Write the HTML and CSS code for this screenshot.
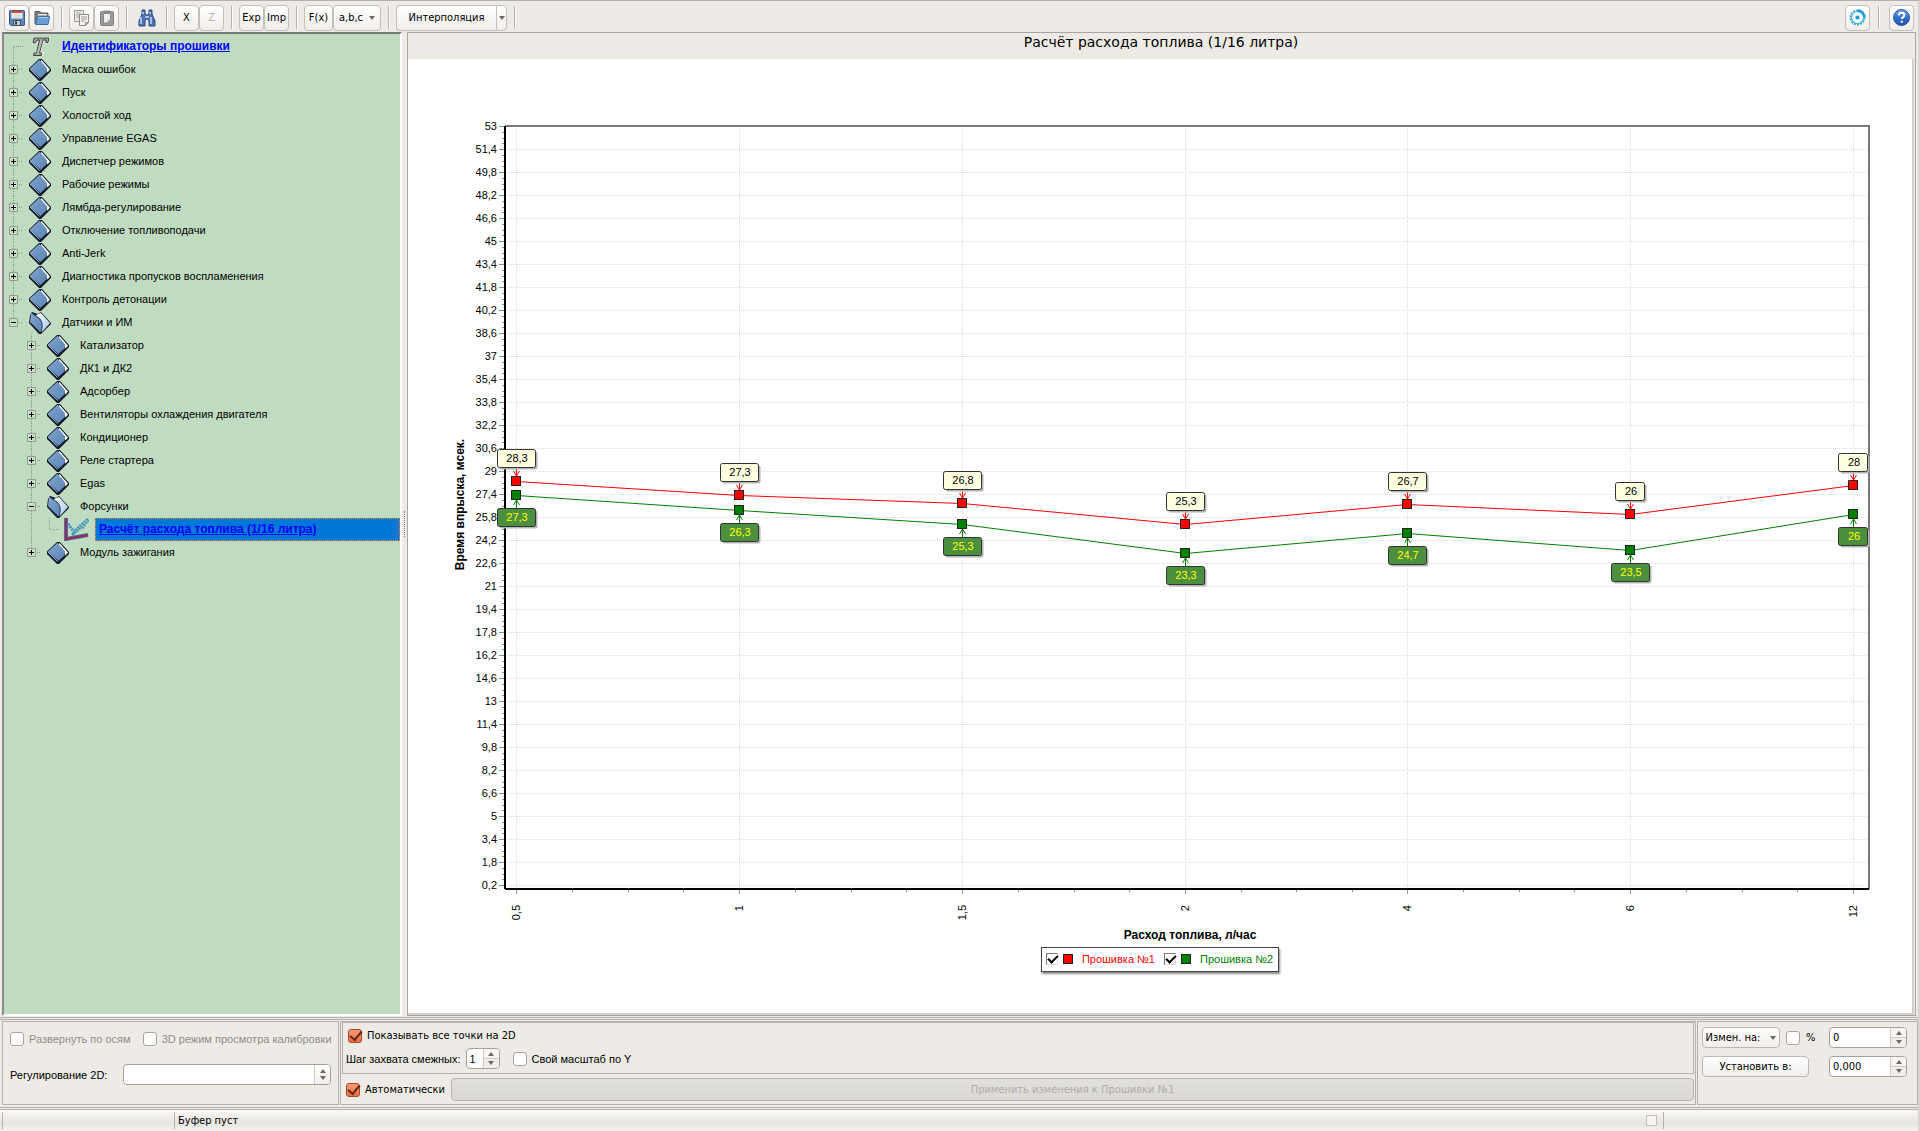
FILE: index.html
```html
<!DOCTYPE html>
<html lang="ru">
<head>
<meta charset="utf-8">
<title>Расчёт расхода топлива</title>
<link rel="stylesheet" href="styles.css">
</head>
<body>
<svg class="defs" aria-hidden="true">
  <linearGradient id="g-blue" x1="0" y1="0" x2="1" y2="1"><stop offset="0" stop-color="#8fb0d6"/><stop offset=".35" stop-color="#7399c6"/><stop offset="1" stop-color="#5c86b4"/></linearGradient>
  <linearGradient id="g-help" x1="0" y1="0" x2="0" y2="1"><stop offset="0" stop-color="#6ba4e8"/><stop offset=".5" stop-color="#3470cc"/><stop offset="1" stop-color="#2450a8"/></linearGradient>
  <linearGradient id="g-page" x1="0" y1="0" x2="1" y2="1"><stop offset="0" stop-color="#fff"/><stop offset="1" stop-color="#a8c4ea"/></linearGradient>
  <symbol id="book" viewBox="0 0 22 22">
    <path d="M0 9.500 10 0h3l9 10v2L12 22h-2L0 12z" fill="#101828"/>
    <path d="M12.500 1 21 10.500l-2.500 3-1.500-3.500-6-7z" fill="#fff"/>
    <path d="M.800 9.800 10.500.8l7.500 8.400-.5 4.300-6 5.500z" fill="url(#g-blue)"/>
    <path d="M1 10.200 10.500 19.500" stroke="#a4bedc" fill="none"/>
  </symbol>
  <symbol id="book-open" viewBox="0 0 22 22">
    <path d="m1 3 2-3 6 2 3-2 10 11v1L12 22h-2L0 11z" fill="#101828"/>
    <path d="M7 3 12 1l9 10-8 9z" fill="url(#g-page)"/>
    <path d="m1 10 1-9 8 5c3 3 4 6 2.500 13.500L11 20z" fill="url(#g-blue)"/>
    <path d="m2.500 1 7.500 5c3 3 4 6 2.500 13" fill="none" stroke="#24405e"/>
  </symbol>
  <symbol id="plus" viewBox="0 0 18 23">
    <path d="M8.500 0v7M8.500 16v7M14 11.500h4" stroke="#8f9a8f" stroke-dasharray="1 1"/>
    <path d="M4.500 7.500h8v8h-8z" fill="#c8e0c8" stroke="#929a92"/>
    <path d="M6 11.500h5M8.500 9v5" stroke="#000"/>
  </symbol>
  <symbol id="minus" viewBox="0 0 18 23">
    <path d="M8.500 0v7M14 11.500h4" stroke="#8f9a8f" stroke-dasharray="1 1"/>
    <path d="M4.500 7.500h8v8h-8z" fill="#c8e0c8" stroke="#929a92"/>
    <path d="M6 11.500h5" stroke="#000"/>
  </symbol>
  <symbol id="minus-mid" viewBox="0 0 18 23">
    <path d="M8.500 16v7" stroke="#8f9a8f" stroke-dasharray="1 1"/>
    <use href="#minus"/>
  </symbol>
  <symbol id="plus-end" viewBox="0 0 18 23">
    <path d="M8.500 0v7M14 11.500h4" stroke="#8f9a8f" stroke-dasharray="1 1"/>
    <path d="M4.500 7.500h8v8h-8z" fill="#c8e0c8" stroke="#929a92"/>
    <path d="M6 11.500h5M8.500 9v5" stroke="#000"/>
  </symbol>
  <symbol id="first" viewBox="0 0 18 23"><path d="M8.500 23V11.500H18" fill="none" stroke="#8f9a8f" stroke-dasharray="1 1"/></symbol>
  <symbol id="through" viewBox="0 0 18 23"><path d="M8.500 0v23" stroke="#8f9a8f" stroke-dasharray="1 1"/></symbol>
  <symbol id="last" viewBox="0 0 18 23"><path d="M8.500 0v11.500H18" fill="none" stroke="#8f9a8f" stroke-dasharray="1 1"/></symbol>
</svg>

<header class="toolbar">
  <div class="group">
    <button class="tool" aria-label="Сохранить"><svg width="16" height="16" viewBox="0 0 16 16"><path d="M1 .5h14l.5.5v14l-.5.5H2L.5 14V1z" fill="#5b88bc" stroke="#345c90"/><path d="M2.500 1h11v7.500h-11z" fill="#f4f4f4"/><path d="M2.500 1h11v2h-11z" fill="#e2472c"/><path d="M4 5h8M4 7h8" stroke="#c4c8cc"/><path d="M4.500 10.500h7v5h-7z" fill="#c6c9cc" stroke="#3d4a58"/><path d="M6 11.500h2v3H6z" fill="#26384e"/></svg></button>
    <button class="tool" aria-label="Открыть"><svg width="16" height="16" viewBox="0 0 16 16"><path d="M1 14V1.500h5l1 1.500h7v4" fill="#7a7f84" stroke="#585d62"/><path d="M4 4.500h9M4 6h9" stroke="#e4e6e8"/><path d="M3.500 6.500H15.500l-1.500 8H1.500z" fill="#6c9fd2" stroke="#3c6da4"/><path d="M4 7.500h10.500" stroke="#a8caec"/></svg></button>
  </div>
  <i class="sep"></i>
  <div class="group">
    <button class="tool" aria-label="Копировать" disabled><svg width="16" height="16" viewBox="0 0 16 16"><path d="M.5.5h9v11h-9z" fill="#e8e8e8" stroke="#9a9a9a"/><path d="M2 3h5M2 5h5M2 7h3" stroke="#aaa"/><path d="M5.500 4.500h9v8l-3 3h-6z" fill="#f2f2f2" stroke="#8c8c8c"/><path d="M7 7h6M7 9h6M7 11h4" stroke="#a0a0a0"/><path d="M11.500 15.500v-3h3z" fill="#ccc" stroke="#8c8c8c"/></svg></button>
    <button class="tool" aria-label="Вставить" disabled><svg width="16" height="16" viewBox="0 0 16 16"><rect x="1.500" y="1.500" width="13" height="14" rx="1" fill="#9a9a9a" stroke="#808080"/><path d="M4.500 3.500h7v6l-3 3.500h-4z" fill="#eee" stroke="#888"/><path d="M5 .5h6V4H5z" fill="#8a8a8a"/><path d="M8.500 13V9.500h3z" fill="#bbb"/></svg></button>
  </div>
  <i class="sep"></i>
  <button class="tool flat" aria-label="Найти"><svg width="18" height="18" viewBox="0 0 18 18"><path d="M4 1h3v3l1 2h2l1-2V1h3v4l3 7v5h-6v-5l-1-2H8l-1 2v5H1v-5l3-7z" fill="#4e74b0" stroke="#2a4c86"/><path d="M3 8v7M13 8v7M5 3v2M12 3v2" stroke="#c4d8f4" stroke-width="1.500"/><path d="M7 7h4v2H7z" fill="#a9c2e6"/></svg></button>
  <i class="sep"></i>
  <div class="group">
    <button class="tool">X</button>
    <button class="tool" disabled>Z</button>
  </div>
  <i class="sep"></i>
  <div class="group">
    <button class="tool">Exp</button>
    <button class="tool">Imp</button>
  </div>
  <i class="sep"></i>
  <div class="group">
    <button class="tool wide">F(x)</button>
    <button class="tool menu">a,b,c <i class="down"></i></button>
  </div>
  <i class="sep"></i>
  <div class="group split">
    <button class="tool main">Интерполяция</button>
    <button class="tool arrow" aria-label="Варианты интерполяции"><i class="down"></i></button>
  </div>
  <i class="sep"></i>
  <span class="spacer"></span>
  <button class="tool" aria-label="Настройки"><svg width="17" height="17" viewBox="0 0 17 17"><circle cx="8.500" cy="8.500" r="7" fill="none" stroke="#35aee4" stroke-width="2" stroke-dasharray="2 1.140"/><circle cx="8.500" cy="8.500" r="6" fill="none" stroke="#35aee4" stroke-width="1"/><path d="M8.500 1.500a7 7 0 0 1 7 7" fill="none" stroke="#1c9bdc" stroke-width="2.500"/><circle cx="8.500" cy="8.500" r="2" fill="#1c9bdc"/></svg></button>
  <i class="sep roomy"></i>
  <button class="tool" aria-label="Справка"><svg width="17" height="17" viewBox="0 0 17 17"><circle cx="8.500" cy="8.500" r="8" fill="url(#g-help)" stroke="#2c55a8"/><path d="M5.800 6.500c0-3.500 5.600-3.500 5.600-.4 0 2-2.600 2-2.600 4" fill="none" stroke="#fff" stroke-width="2"/><path d="M7.700 11.700h2.200v2H7.700z" fill="#fff"/></svg></button>
</header>

<main class="workspace">
  <nav class="tree" aria-label="Калибровки">
    <ul>
      <li class="row"><svg class="cell"><use href="#first"/></svg><svg class="icon" viewBox="0 0 22 22"><path d="M5 1h16l-1 6h-3l0-3h-2l-3 12h3l-1 4H5l1-4h2l3-12H8L6 8H3z" fill="#fff"/><path d="M5 2h15l-1 4.500h-2L17 4h-3l-3.500 13h2.500l-.5 2.500H4.500L5 17h2.500L10.500 4H8L6 7H4z" fill="#a2a8a4" stroke="#3c403e"/><path d="m12.500 4-4 14" stroke="#b4b9b6" stroke-width="2"/></svg><a class="label link" href="#ids">Идентификаторы прошивки</a></li>
      <li class="row"><button class="cell" aria-label="Развернуть"><svg><use href="#plus"/></svg></button><svg class="icon"><use href="#book"/></svg><span class="label">Маска ошибок</span></li>
      <li class="row"><button class="cell" aria-label="Развернуть"><svg><use href="#plus"/></svg></button><svg class="icon"><use href="#book"/></svg><span class="label">Пуск</span></li>
      <li class="row"><button class="cell" aria-label="Развернуть"><svg><use href="#plus"/></svg></button><svg class="icon"><use href="#book"/></svg><span class="label">Холостой ход</span></li>
      <li class="row"><button class="cell" aria-label="Развернуть"><svg><use href="#plus"/></svg></button><svg class="icon"><use href="#book"/></svg><span class="label">Управление EGAS</span></li>
      <li class="row"><button class="cell" aria-label="Развернуть"><svg><use href="#plus"/></svg></button><svg class="icon"><use href="#book"/></svg><span class="label">Диспетчер режимов</span></li>
      <li class="row"><button class="cell" aria-label="Развернуть"><svg><use href="#plus"/></svg></button><svg class="icon"><use href="#book"/></svg><span class="label">Рабочие режимы</span></li>
      <li class="row"><button class="cell" aria-label="Развернуть"><svg><use href="#plus"/></svg></button><svg class="icon"><use href="#book"/></svg><span class="label">Лямбда-регулирование</span></li>
      <li class="row"><button class="cell" aria-label="Развернуть"><svg><use href="#plus"/></svg></button><svg class="icon"><use href="#book"/></svg><span class="label">Отключение топливоподачи</span></li>
      <li class="row"><button class="cell" aria-label="Развернуть"><svg><use href="#plus"/></svg></button><svg class="icon"><use href="#book"/></svg><span class="label">Anti-Jerk</span></li>
      <li class="row"><button class="cell" aria-label="Развернуть"><svg><use href="#plus"/></svg></button><svg class="icon"><use href="#book"/></svg><span class="label">Диагностика пропусков воспламенения</span></li>
      <li class="row"><button class="cell" aria-label="Развернуть"><svg><use href="#plus"/></svg></button><svg class="icon"><use href="#book"/></svg><span class="label">Контроль детонации</span></li>
      <li>
        <div class="row"><button class="cell" aria-label="Свернуть"><svg><use href="#minus"/></svg></button><svg class="icon"><use href="#book-open"/></svg><span class="label">Датчики и ИМ</span></div>
        <ul class="nested">
          <li class="row"><button class="cell" aria-label="Развернуть"><svg><use href="#plus"/></svg></button><svg class="icon"><use href="#book"/></svg><span class="label">Катализатор</span></li>
          <li class="row"><button class="cell" aria-label="Развернуть"><svg><use href="#plus"/></svg></button><svg class="icon"><use href="#book"/></svg><span class="label">ДК1 и ДК2</span></li>
          <li class="row"><button class="cell" aria-label="Развернуть"><svg><use href="#plus"/></svg></button><svg class="icon"><use href="#book"/></svg><span class="label">Адсорбер</span></li>
          <li class="row"><button class="cell" aria-label="Развернуть"><svg><use href="#plus"/></svg></button><svg class="icon"><use href="#book"/></svg><span class="label">Вентиляторы охлаждения двигателя</span></li>
          <li class="row"><button class="cell" aria-label="Развернуть"><svg><use href="#plus"/></svg></button><svg class="icon"><use href="#book"/></svg><span class="label">Кондиционер</span></li>
          <li class="row"><button class="cell" aria-label="Развернуть"><svg><use href="#plus"/></svg></button><svg class="icon"><use href="#book"/></svg><span class="label">Реле стартера</span></li>
          <li class="row"><button class="cell" aria-label="Развернуть"><svg><use href="#plus"/></svg></button><svg class="icon"><use href="#book"/></svg><span class="label">Egas</span></li>
          <li>
            <div class="row"><button class="cell" aria-label="Свернуть"><svg><use href="#minus-mid"/></svg></button><svg class="icon"><use href="#book-open"/></svg><span class="label">Форсунки</span></div>
            <ul>
              <li class="row selected"><svg class="cell"><use href="#through"/></svg><svg class="cell"><use href="#last"/></svg><svg class="chart-icon" viewBox="0 0 27 23"><path d="M3 0v21l22-4" fill="none" stroke="#4a6ea8" stroke-width="4"/><path d="M3 0v21l22-4" fill="none" stroke="#9a2c50" stroke-width="2"/><path d="m5 6 6 8 5-5 9-8M9 17l7-6 4-2 5-7" fill="none" stroke="#3c90cc" stroke-width="3" stroke-dasharray="2 1"/><path d="m11 16 6-6 8-7" fill="none" stroke="#7cbc98" stroke-width="2" stroke-dasharray="1 1"/></svg><a class="label link" href="#fuel">Расчёт расхода топлива (1/16 литра)</a></li>
            </ul>
          </li>
          <li class="row"><button class="cell" aria-label="Развернуть"><svg><use href="#plus-end"/></svg></button><svg class="icon"><use href="#book"/></svg><span class="label">Модуль зажигания</span></li>
        </ul>
      </li>
    </ul>
  </nav>
  <div class="splitter"></div>
  <section class="chart-pane">
    <h1>Расчёт расхода топлива (1/16 литра)</h1>
    <div class="chart">
      <div class="plot"><svg id="plot" role="img" aria-label="Время впрыска от расхода топлива"></svg></div>
      <div class="legend">
        <label class="red"><input type="checkbox" checked data-series="0"><i class="mark"></i>Прошивка №1</label>
        <label class="green"><input type="checkbox" checked data-series="1"><i class="mark"></i>Прошивка №2</label>
      </div>
    </div>
  </section>
</main>

<section class="controls">
  <div class="box view">
    <div class="line">
      <label class="check off"><input type="checkbox" disabled>Развернуть по осям</label>
      <label class="check off"><input type="checkbox" disabled>3D режим просмотра калибровки</label>
    </div>
    <div class="line adjust">
      <label for="adjust">Регулирование 2D:</label>
      <span class="field"><select id="adjust"><option></option></select><span class="steps"><i class="up"></i><i class="down"></i></span></span>
    </div>
  </div>
  <div class="box points">
    <div class="inner">
      <div class="line"><label class="check"><input type="checkbox" checked>Показывать все точки на 2D</label></div>
      <div class="line step">
        <label for="step">Шаг захвата смежных:</label>
        <span class="field small"><input id="step" type="text" value="1"><span class="steps halves"><i class="up"></i><i class="down"></i></span></span>
        <label class="check"><input type="checkbox">Свой масштаб по Y</label>
      </div>
    </div>
    <div class="line apply">
      <label class="check"><input type="checkbox" checked>Автоматически</label>
      <button class="wide-button" disabled>Применить изменения к Прошивки №1</button>
    </div>
  </div>
  <div class="box change">
    <button class="push by">Измен. на: <i class="down"></i></button>
    <label class="check percent"><input type="checkbox">%</label>
    <span class="field"><input type="text" value="0" aria-label="Изменить на"><span class="steps halves"><i class="up"></i><i class="down"></i></span></span>
    <button class="push set">Установить в:</button>
    <span class="field"><input type="text" value="0,000" aria-label="Установить в"><span class="steps halves"><i class="up"></i><i class="down"></i></span></span>
  </div>
</section>

<footer class="status">
  <span class="part first"></span>
  <span class="part message">Буфер пуст</span>
  <i class="lamp"></i>
  <span class="part tail"></span>
</footer>
<script src="chart.js"></script>
</body>
</html>
```
FILE: styles.css
```css
* { box-sizing: border-box; }
body {
  margin: 0;
  min-height: 100vh;
  display: flex;
  flex-direction: column;
  background: #eeebe6;
  border-top: 1px solid #b5b0ab;
  border-right: 2px solid #d8d4cf;
  color: #000;
  font: 11px/14px "DejaVu Sans Condensed", "DejaVu Sans", sans-serif;
}
button, input, select { font: inherit; color: inherit; margin: 0; }
ul { list-style: none; margin: 0; padding: 0; }
.defs { position: absolute; width: 0; height: 0; }

/* arrows */
.down, .up {
  display: inline-block;
  border: 3px solid transparent;
}
.down { border-top: 4px solid #6c6862; border-bottom: 0; }
.up { border-bottom: 4px solid #6c6862; border-top: 0; }

/* toolbar */
.toolbar {
  display: flex;
  align-items: center;
  height: 31px;
  padding: 2px 4px 0;
}
.group { display: flex; }
.spacer { flex: 1; }
.sep {
  width: 2px;
  height: 23px;
  margin: 0 6px 0 7px;
  border-left: 1px solid #b8b3ac;
  border-right: 1px solid #fbfaf8;
}
.roomy { margin: 0 9px 0 8px; }
.tool {
  display: flex;
  align-items: center;
  justify-content: center;
  width: 25px;
  height: 26px;
  padding: 0;
  white-space: nowrap;
  border: 1px solid #c4bfb8;
  border-radius: 4px;
  background: linear-gradient(#fff, #f0eeeb);
}
.tool:disabled { color: #b8b5b0; }
.tool.flat { border-color: transparent; background: none; }
.tool.wide { width: 29px; }
.tool.menu { width: 48px; gap: 6px; }
.tool.main { width: 100px; border-radius: 4px 0 0 4px; border-right: 0; }
.tool.arrow { width: 11px; border-radius: 0 4px 4px 0; }

/* workspace */
.workspace { flex: 1; display: flex; min-height: 0; padding: 0 2px 0 2px; }
.tree {
  flex: none;
  width: 400px;
  padding: 1px 0 0 1px;
  background: #c0dcc0;
  border: 2px solid;
  border-color: #75777a #fff #fff #8c8a88;
  font: 11px/23px "Liberation Sans", Arial, sans-serif;
}
.row { display: flex; align-items: center; height: 23px; }
.nested { padding-left: 18px; }
.cell, .cell svg { flex: none; display: block; width: 18px; height: 23px; }
.cell { padding: 0; border: 0; background: none; }
.icon { flex: none; width: 22px; height: 22px; margin-left: 6px; }
.label { margin-left: 11px; white-space: nowrap; }
.link { font-size: 12px; font-weight: bold; color: #00f; }
.chart-icon { flex: none; width: 27px; height: 23px; margin-right: 5px; margin-left: 4px; }
.selected .label {
  flex: 1;
  margin: 0;
  padding: 0 3px;
  line-height: 21px;
  background: #0078d7;
  border: 1px dotted #ff8728;
}
.splitter { flex: none; width: 5px; display: flex; align-items: center; justify-content: center; }
.splitter::after { content: ""; height: 26px; border-left: 1px dotted #85817b; }
.chart-pane {
  flex: 1;
  min-width: 0;
  display: flex;
  flex-direction: column;
  border: 1px solid #aaa59f;
  padding-right: 1px;
}
h1 {
  margin: 0;
  height: 26px;
  padding-bottom: 6px;
  line-height: 19px;
  font-size: 14px;
  font-weight: normal;
  font-family: "DejaVu Sans", sans-serif;
  text-align: center;
}
.chart {
  flex: 1;
  display: flex;
  flex-direction: column;
  align-items: center;
  padding-bottom: 41px;
  background: #fff;
  border: solid #d0d0d0;
  border-width: 0 2px 2px 0;
}
.plot { flex: 1; width: 100%; min-height: 0; position: relative; }
/* the drawing fills the space that flexbox gives its holder */
#plot { position: absolute; width: 100%; height: 100%; font: 11px "Liberation Sans", Arial, sans-serif; }
#plot .title { font-size: 12px; font-weight: bold; }
.legend {
  display: flex;
  gap: 9px;
  height: 25px;
  margin: 6px 0 0 0;
  padding: 0 5px 0 4px;
  background: #fff;
  border: 1px solid #444;
  box-shadow: 1px 2px 2px #888;
  font: 11px/14px "Liberation Sans", Arial, sans-serif;
}
.legend label { display: flex; align-items: center; padding-bottom: 2px; }
.legend input {
  appearance: none;
  width: 12px;
  height: 12px;
  border: 1px solid;
  border-color: #777 #ddd #ddd #777;
  background: #fff;
}
.legend input:checked::after {
  content: "";
  display: block;
  width: 8px;
  height: 4px;
  margin: 1px 1px;
  border: solid #000;
  border-width: 0 0 2px 2px;
  transform: rotate(-45deg);
}
.mark { width: 10px; height: 10px; margin: 0 9px 0 5px; border: 1px solid #222; background: currentColor; }
.red { color: #f00; }
.green { color: #008000; }

/* bottom controls */
.controls {
  display: grid;
  grid-template-columns: 337px minmax(0, 1fr) 221px;
  gap: 1px;
  padding: 1px 0 2px 2px;
  border-top: 3px double #b5b0ab;
  border-bottom: 3px double #b5b0ab;
  height: 93px;
  margin-top: 1px;
}
.box { border: 1px solid #b5b0ab; }
.line { display: flex; align-items: center; }
.check { display: flex; align-items: center; gap: 5px; white-space: nowrap; }
.check input {
  appearance: none;
  width: 14px;
  height: 14px;
  border: 1px solid #aaa59e;
  border-radius: 3px;
  background: #fff;
}
.check input:checked { background: linear-gradient(#fb9a72, #ef6e40); border-color: #9c4d30; }
.check input:checked::after {
  content: "";
  display: block;
  width: 10px;
  height: 5px;
  margin: 1px 1px;
  border: solid #5c2a18;
  border-width: 0 0 2px 2px;
  transform: rotate(-50deg);
}
.off { color: #908d88; }
.view { padding: 10px 7px; font-family: "Liberation Sans", Arial, sans-serif; }
.view .line { gap: 12px; }
.view .adjust { margin-top: 18px; gap: 0; justify-content: space-between; }
.view .field { width: 208px; }
.field {
  display: flex;
  height: 21px;
  background: #fff;
  border: 1px solid #a5a099;
  border-radius: 4px;
  overflow: hidden;
}
.field input, .field select {
  appearance: none;
  flex: 1;
  min-width: 0;
  padding: 0 3px;
  border: 0;
  background: none;
}
.steps {
  display: flex;
  flex-direction: column;
  align-items: center;
  justify-content: center;
  gap: 3px;
  width: 16px;
  border-left: 1px solid #cfcac4;
  background: linear-gradient(#fff, #f0eeeb);
}
.halves { gap: 5px; background: linear-gradient(#f6f5f3 9px, #cfcac4 9px, #cfcac4 10px, #f0eeeb 10px); }
.points { padding: 0 1px; }
.inner { height: 52px; padding: 6px 4px 0 3px; border: 1px solid #b5b0ab; }
.inner > .line:first-child { padding-left: 2px; }
.step { gap: 5px; margin-top: 5px; font-family: "Liberation Sans", Arial, sans-serif; }
.step .check { margin-left: 8px; }
.small { width: 34px; }
.apply { gap: 6px; padding: 4px 0 0 4px; }
.wide-button {
  flex: 1;
  height: 23px;
  padding: 0;
  color: #b0ada8;
  border: 1px solid #b9b5af;
  border-radius: 4px;
  background: linear-gradient(#e2e0dd, #d9d8d6);
}
.change {
  display: grid;
  grid-template-columns: 78px 49px 78px;
  grid-template-rows: 21px 21px;
  gap: 8px 0;
  padding: 5px 4px;
}
.push {
  padding: 0;
  border: 1px solid #bdb8b1;
  border-radius: 4px;
  background: linear-gradient(#fff, #f0eeeb);
}
.by { display: flex; align-items: center; justify-content: center; gap: 10px; }
.percent { gap: 6px; padding-left: 6px; }
.set { grid-column: 1 / 3; margin-right: 20px; }

/* status bar */
.status {
  display: flex;
  align-items: center;
  height: 21px;
  padding: 0 2px;
  background: linear-gradient(#fbfaf9, #e6e4df 60%, #f3f1ee);
}
.part { height: 17px; padding-left: 3px; border-left: 1px solid #b5b0ab; }
.first { width: 172px; }
.message { flex: 1; line-height: 17px; }
.lamp { width: 11px; height: 11px; margin-right: 6px; border: 1px solid #c4c0ba; background: #f5f4f2; }
.tail { width: 253px; }
```
FILE: chart.js
```js
const svg = document.getElementById('plot');
const xs = ['0,5', '1', '1,5', '2', '4', '6', '12'];
const series = [
  { values: [28.3, 27.3, 26.8, 25.3, 26.7, 26, 28], line: '#ff0000', fill: '#ffffe1', text: '#000', above: true, on: true },
  { values: [27.3, 26.3, 25.3, 23.3, 24.7, 23.5, 26], line: '#008000', fill: '#4c8f3f', text: '#ffff00', above: false, on: true }
];
const margin = { left: 97, right: 43, top: 67, bottom: 52 };
const comma = n => String(Math.round(n * 10) / 10).replace('.', ',');

function draw() {
  const w = svg.clientWidth, h = svg.clientHeight;
  const left = margin.left, right = w - margin.right, top = margin.top, bottom = h - margin.bottom;
  const y = v => Math.round(bottom - 1 - v * (bottom - top - 1) / 53);
  const x = i => Math.round(left + 11 + i * (right - left - 27) / 6);
  let out = '';
  const line = (x1, y1, x2, y2, extra) => { out += `<path d="M${x1} ${y1}L${x2} ${y2}" ${extra}/>`; };
  const grid = 'stroke="#dcdcdc" stroke-dasharray="1 1"';
  const tick = 'stroke="#909090"';

  for (let k = 0; k <= 33; k++) {
    const v = 53 - k * 1.6, py = y(v) + 0.5;
    if (k) line(left, py, right, py, grid);
    line(left - 6, py, left - 1, py, tick);
    for (let m = 1; m < 4 && k < 33; m++) line(left - 3, y(v - m * 0.4) + 0.5, left, y(v - m * 0.4) + 0.5, tick);
    out += `<text x="${left - 8}" y="${y(v) + 4}" text-anchor="end">${comma(v)}</text>`;
  }
  xs.forEach((name, i) => {
    const px = x(i) + 0.5;
    line(px, top, px, bottom, grid);
    line(px, bottom, px, bottom + 5, tick);
    for (let m = 1; m < 4 && i < 6; m++) {
      const mx = Math.round(x(i) + (x(i + 1) - x(i)) * m / 4) + 0.5;
      line(mx, bottom, mx, bottom + 3, tick);
    }
    out += `<text transform="translate(${x(i) + 4} ${bottom + 16}) rotate(-90)" text-anchor="end">${name}</text>`;
  });
  line(left, top, right, top, 'stroke="#777" stroke-width="2"');
  line(right, top - 1, right, bottom, 'stroke="#777" stroke-width="2"');
  line(left, top, left, bottom, 'stroke="#000" stroke-width="2"');
  line(left, bottom, right, bottom, 'stroke="#000" stroke-width="2"');
  out += `<text class="title" x="${(left + right) / 2 + 3}" y="${bottom + 50}" text-anchor="middle">Расход топлива, л/час</text>`;
  out += `<text class="title" transform="translate(56 ${(top + bottom) / 2 - 3}) rotate(-90)" text-anchor="middle">Время впрыска, мсек.</text>`;

  series.filter(s => s.on).forEach(s => {
    out += `<polyline points="${s.values.map((v, i) => (x(i) + 0.5) + ',' + (y(v) + 0.5)).join(' ')}" fill="none" stroke="${s.line}"/>`;
    s.values.forEach((v, i) => {
      const px = x(i), py = y(v), label = comma(v);
      const bw = label.length > 2 ? 39 : 30;
      const bx = px - (bw === 39 ? 19 : 15) + 0.5, by = (s.above ? py - 32 : py + 13) + 0.5;
      const tip = s.above ? py - 5 : py + 5, dir = s.above ? -1 : 1;
      out += `<path d="M${px + .5} ${tip + dir * 9}V${tip}M${px - 2.5} ${tip + dir * 5}L${px + .5} ${tip}L${px + 3.5} ${tip + dir * 5}" fill="none" stroke="${s.line}"/>`;
      out += `<rect x="${px - 4.5}" y="${py - 4.5}" width="9" height="9" fill="${s.line}" stroke="#222"/>`;
      out += `<rect x="${bx + 2}" y="${by + 2}" width="${bw - 1}" height="18" rx="2" fill="#b4b4b4"/>`;
      out += `<rect x="${bx}" y="${by}" width="${bw - 1}" height="18" rx="2" fill="${s.fill}" stroke="#333"/>`;
      out += `<text x="${px + 1}" y="${by + 12}" text-anchor="middle" fill="${s.text}">${label}</text>`;
    });
  });
  svg.innerHTML = out;
}

document.querySelectorAll('[data-series]').forEach(box => box.addEventListener('change', () => {
  series[box.dataset.series].on = box.checked;
  draw();
}));
window.addEventListener('resize', draw);
draw();
```
